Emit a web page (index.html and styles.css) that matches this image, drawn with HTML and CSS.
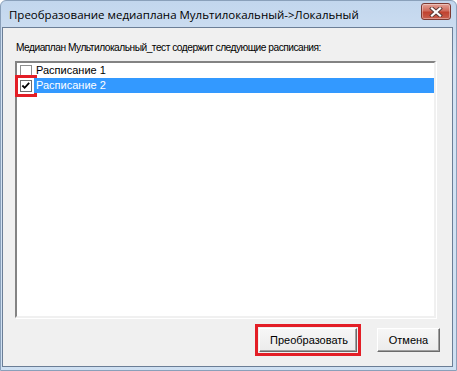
FILE: index.html
```html
<!DOCTYPE html>
<html lang="ru">
<head>
    <meta charset="UTF-8">
    <title>Преобразование медиаплана</title>
    <link rel="stylesheet" href="styles.css">
</head>
<body>
    <div class="window">
        <div class="titlebar">
            <span class="title">Преобразование медиаплана Мультилокальный-&gt;Локальный</span>
            <button class="close" aria-label="Закрыть">
                <svg width="14" height="10" viewBox="0 0 14 10">
                    <path d="M3 1.5 L11 8.5 M11 1.5 L3 8.5" stroke="#5a3a36" stroke-width="4" stroke-linecap="square"/>
                    <path d="M3 1.5 L11 8.5 M11 1.5 L3 8.5" stroke="#ffffff" stroke-width="2.2" stroke-linecap="square"/>
                </svg>
            </button>
        </div>
        <div class="client">
            <p class="caption">Медиаплан Мультилокальный_тест содержит следующие расписания:</p>
            <ul class="listbox">
                <li class="item">
                    <span class="check"></span>
                    <span class="item-text">Расписание 1</span>
                </li>
                <li class="item selected">
                    <span class="check checked marked">
                        <svg width="11" height="11" viewBox="0 0 11 11">
                            <path d="M1.5 5.5 L4 8 L9 2.5" stroke="#000" stroke-width="2" fill="none"/>
                        </svg>
                    </span>
                    <span class="item-text">Расписание 2</span>
                </li>
            </ul>
            <div class="footer">
                <button class="btn marked">Преобразовать</button>
                <button class="btn btn-cancel">Отмена</button>
            </div>
        </div>
    </div>
</body>
</html>
```

FILE: styles.css
```css
:root {
    --frame-top: #c2d6ed;
    --frame-bottom: #d5e4f4;
    --client-bg: #f0f0f0;
    --select-color: #3399ff;
    --mark-color: #e31e26;
    --text-color: #000;
}

html, body {
    margin: 0;
    padding: 0;
}

body {
    width: 457px;
    height: 371px;
    overflow: hidden;
    background: #fff;
}

.window {
    box-sizing: border-box;
    height: 371px;
    display: flex;
    flex-direction: column;
    background: linear-gradient(var(--frame-top), var(--frame-bottom) 60px, #cfe0f2);
    border: 1px solid #8aa0ba;
    border-radius: 6px 6px 0 0;
    padding: 0 3px 3px 1px;
}

.titlebar {
    height: 26px;
    display: flex;
    align-items: center;
    justify-content: space-between;
    padding: 0 2px 0 7px;
}

.title {
    font-family: "Open Sans", sans-serif;
    font-size: 11.5px;
    color: var(--text-color);
    margin-top: 1px;
}

.close {
    width: 30px;
    height: 17px;
    margin-top: -5px;
    padding: 0;
    display: flex;
    align-items: center;
    justify-content: center;
    border: 1px solid #7c3a33;
    border-radius: 3px;
    background: linear-gradient(#e2a297, #d06b5c 45%, #c0422f 55%, #c9604f);
    box-shadow: inset 0 0 0 1px rgba(255, 255, 255, 0.35);
}

.client {
    flex: 1;
    display: flex;
    flex-direction: column;
    background: var(--client-bg);
    border: 1px solid #6b7e96;
    font-family: "Liberation Sans", Arial, sans-serif;
    font-size: 11px;
    color: var(--text-color);
}

.caption {
    margin: 13px 0 0 13px;
    line-height: 13px;
    font-size: 10.2px;
    letter-spacing: -0.5px;
}

.listbox {
    list-style: none;
    margin: 7px 0 0 12px;
    padding: 0;
    width: 417px;
    height: 253px;
    background: #fff;
    border-style: solid;
    border-width: 2px;
    border-color: #838383 #f0f0f0 #f0f0f0 #838383;
    box-shadow: 1px 1px 0 #fff;
}

.item {
    height: 15px;
    display: flex;
    align-items: center;
}

.check {
    box-sizing: border-box;
    width: 12px;
    height: 12px;
    margin: 0 2px 0 3px;
    border: 1px solid #8e8f8f;
    background: #fff;
    display: flex;
    align-items: center;
    justify-content: center;
}

.check.checked {
    border-color: #6d6d6d;
}

.item-text {
    flex: 1;
    height: 15px;
    line-height: 15px;
    padding-left: 2px;
}

.selected .item-text {
    background: var(--select-color);
    color: #fff;
}

.marked {
    outline: 3px solid var(--mark-color);
    outline-offset: 2px;
}

.footer {
    margin-top: auto;
    display: flex;
    justify-content: flex-end;
    gap: 20px;
    padding: 0 12px 14px 0;
}

.btn {
    box-sizing: border-box;
    height: 24px;
    padding: 0 10px;
    font-family: "Liberation Sans", Arial, sans-serif;
    font-size: 11px;
    color: var(--text-color);
    background: linear-gradient(#f6f6f6, #ebebeb);
    border-style: solid;
    border-width: 1px;
    border-color: #fff #6b6b6b #6b6b6b #fff;
    box-shadow: inset -1px -1px 0 #a0a0a0;
}

.btn.marked {
    width: 98px;
    outline-offset: 1px;
}

.btn-cancel {
    width: 63px;
}
```
